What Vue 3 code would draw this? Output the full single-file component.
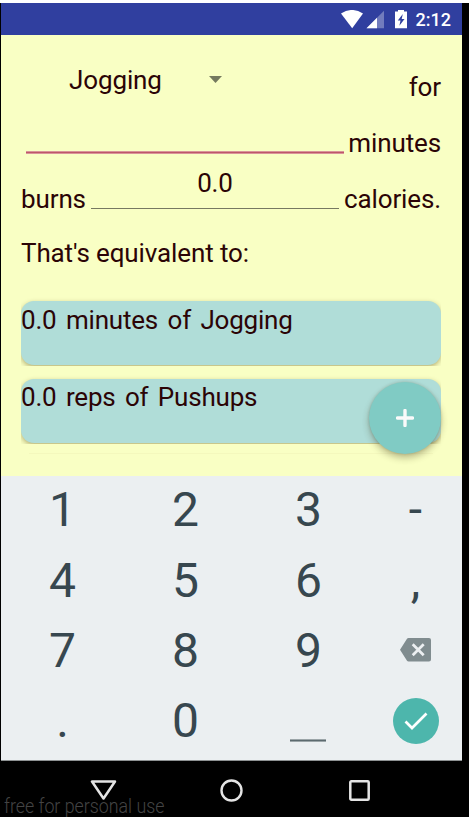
<script setup>
const results = ['0.0 minutes of Jogging', '0.0 reps of Pushups']
const keys = ['1', '2', '3', '-', '4', '5', '6', ',', '7', '8', '9', 'del', '.', '0', 'space', 'done']
</script>

<template>
  <div class="device">
    <div class="screen">
      <header class="status">
        <svg class="signals" width="68" height="20" viewBox="0 0 68 20">
          <path d="M0 3.500Q11-3.600 22 3.500L11.2 18.2Z" fill="#fff" />
          <path d="M25.500 18.200H43V.8Z" fill="#727cbd" />
          <path d="M25.500 18.200H36V7.800Z" fill="#fff" />
          <path d="M54 1.500H57V0H63V1.500H66V18.300H54Z" fill="#fff" />
          <path d="M61.800 4L56.800 10.600H59.500L58.400 15.800L63.500 9H60.700Z" fill="#303f9f" />
        </svg>
        <span class="clock">2:12</span>
      </header>

      <main class="app">
        <div class="row">
          <div class="spinner">
            <span>Jogging</span>
            <svg width="13" height="7" viewBox="0 0 13 7"><path d="M0 0H13L6.500 7Z" fill="#757a5e" /></svg>
          </div>
          <span class="push">for</span>
        </div>
        <div class="row">
          <span class="minutes-line"></span>
          <span class="push">minutes</span>
        </div>
        <div class="row">
          <span class="burns">burns</span>
          <span class="calories-value">0.0</span>
          <span class="push calories">calories.</span>
        </div>
        <div class="row equivalent">That's equivalent to:</div>

        <div class="results">
          <div v-for="r in results" :key="r" class="clip">
            <div class="card">{{ r }}</div>
          </div>
        </div>
        <div class="next-shadow"></div>
        <button class="fab">
          <svg width="18" height="18" viewBox="0 0 18 18"><path d="M9 1.500V16.500M1.500 9H16.500" stroke="#fafafa" stroke-width="3.400" stroke-linecap="round" /></svg>
        </button>
      </main>

      <section class="keypad">
        <div v-for="k in keys" :key="k" class="key">
          <svg v-if="k === 'del'" class="del" width="31" height="24" viewBox="0 0 31 24">
            <path d="M8.500 0H29Q31 0 31 2V21.500Q31 23.500 29 23.500H8.500Q7.500 23.500 7 22.700L0 11.800L7 .8Q7.500 0 8.500 0Z" fill="#808c8f" />
            <path d="M12.700 6.200L23.700 17.200M23.700 6.200L12.700 17.200" stroke="#eceff1" stroke-width="2.700" />
          </svg>
          <span v-else-if="k === 'space'" class="space"></span>
          <span v-else-if="k === 'done'" class="done">
            <svg width="24" height="18" viewBox="0 0 24 18"><path d="M1.500 9.500L8 16L22.500 1.500" fill="none" stroke="#fff" stroke-width="2.700" /></svg>
          </span>
          <template v-else>{{ k }}</template>
        </div>
      </section>
    </div>

    <nav class="nav">
      <svg width="27" height="20" viewBox="0 0 27 20"><path d="M2 1.500H25L13.500 18.500Z" fill="none" stroke="#e4e4e4" stroke-width="2.500" stroke-linejoin="round" /></svg>
      <svg width="23" height="23" viewBox="0 0 23 23"><circle cx="11.500" cy="11.500" r="10" fill="none" stroke="#e4e4e4" stroke-width="2.400" /></svg>
      <svg width="21" height="21" viewBox="0 0 21 21"><rect x="1.300" y="1.300" width="18.400" height="18.400" rx="1" fill="none" stroke="#e4e4e4" stroke-width="2.500" /></svg>
      <span class="watermark">free for personal use</span>
    </nav>
  </div>
</template>

<style>
body {
  background: #fff;
}
</style>

<style scoped>
.device {
  box-sizing: border-box;
  width: 469px;
  height: 814px;
  margin-top: 3px;
  padding: 0 7px 0 1px;
  background: #000;
  overflow: hidden;
  font-family: Roboto, sans-serif;
}
.status {
  box-sizing: border-box;
  height: 32px;
  padding: 7px 11px 0 0;
  display: flex;
  justify-content: flex-end;
  align-items: flex-start;
  gap: 7px;
  background: #303f9f;
  color: #fff;
}
.clock {
  font-size: 18px;
  line-height: 20px;
  font-weight: 500;
}
.app {
  position: relative;
  box-sizing: border-box;
  height: 441px;
  padding: 0 21px 0 20px;
  background: #f9ffc4;
  color: #2b0406;
  font-size: 26px;
  line-height: 30px;
  letter-spacing: -0.12px;
}
.row {
  display: flex;
  align-items: flex-end;
  height: 56px;
  white-space: nowrap;
}
.row:first-child {
  height: 67px;
}
.push {
  margin-left: auto;
}
.spinner {
  display: flex;
  align-items: center;
  justify-content: space-between;
  width: 153px;
  padding: 0 0 7px 48px;
}
.spinner svg {
  margin-top: -2px;
}
.minutes-line {
  width: 318px;
  height: 1px;
  margin: 0 0 4px 5px;
  background: #bd5868;
  border: solid #da949a;
  border-width: 1px 0;
}
.burns {
  width: 64px;
}
.calories-value {
  width: 248px;
  height: 40px;
  margin: 0 0 5px 6px;
  border-bottom: 1px solid #777961;
  line-height: 31px;
  text-align: center;
}
.equivalent {
  height: 54px;
}
.results {
  display: grid;
  gap: 14px;
  margin-top: 33px;
}
.clip {
  clip-path: inset(-8px 0 -1px 0);
}
.card {
  height: 64px;
  line-height: 37px;
  border-radius: 13px;
  background: #b0ddd8;
  box-shadow: 0 2px 5px rgba(80, 60, 0, 0.4);
  word-spacing: 3.200px;
  letter-spacing: -0.2px;
  white-space: nowrap;
}
.clip:first-child .card {
  line-height: 38px;
}
.next-shadow {
  height: 1px;
  margin: 10px 8px 0;
  background: #f4f8bd;
}
.fab {
  position: absolute;
  right: 21px;
  top: 347px;
  width: 72px;
  height: 72px;
  display: grid;
  place-items: center;
  padding: 0;
  border: 0;
  border-radius: 50%;
  background: #80cbc4;
  box-shadow: 0 4px 7px rgba(60, 50, 20, 0.32), 0 0 3px rgba(60, 50, 20, 0.2);
}
.keypad {
  display: grid;
  grid-template-columns: 123px 123px 123px 91px;
  grid-template-rows: repeat(4, 70.400px);
  align-content: start;
  box-sizing: border-box;
  height: 285px;
  border-bottom: 1px solid #8d9192;
  background: #ebeff1;
  color: #37474f;
  font-size: 48px;
  line-height: 56px;
}
.key {
  display: flex;
  align-items: center;
  justify-content: center;
  padding-bottom: 2px;
}
.del {
  margin-bottom: 1px;
}
.space {
  width: 36px;
  height: 1px;
  margin: 38px 1px 0 0;
  background: #5c6a6f;
  border: solid #9ba5a8;
  border-width: 1px 0;
}
.done {
  display: grid;
  place-items: center;
  width: 46px;
  height: 46px;
  margin-bottom: 1px;
  border-radius: 50%;
  background: #4db6ac;
}
.nav {
  position: relative;
  display: flex;
  align-items: center;
  height: 54px;
  padding: 2px 0 0 89px;
  gap: 103px;
}
.nav svg:nth-child(3) {
  margin-left: 3px;
}
.watermark {
  position: absolute;
  left: 3px;
  top: 35px;
  font-size: 20px;
  line-height: 20px;
  font-weight: 300;
  color: #444;
  white-space: nowrap;
  transform: scaleX(0.89);
  transform-origin: left;
}
</style>
